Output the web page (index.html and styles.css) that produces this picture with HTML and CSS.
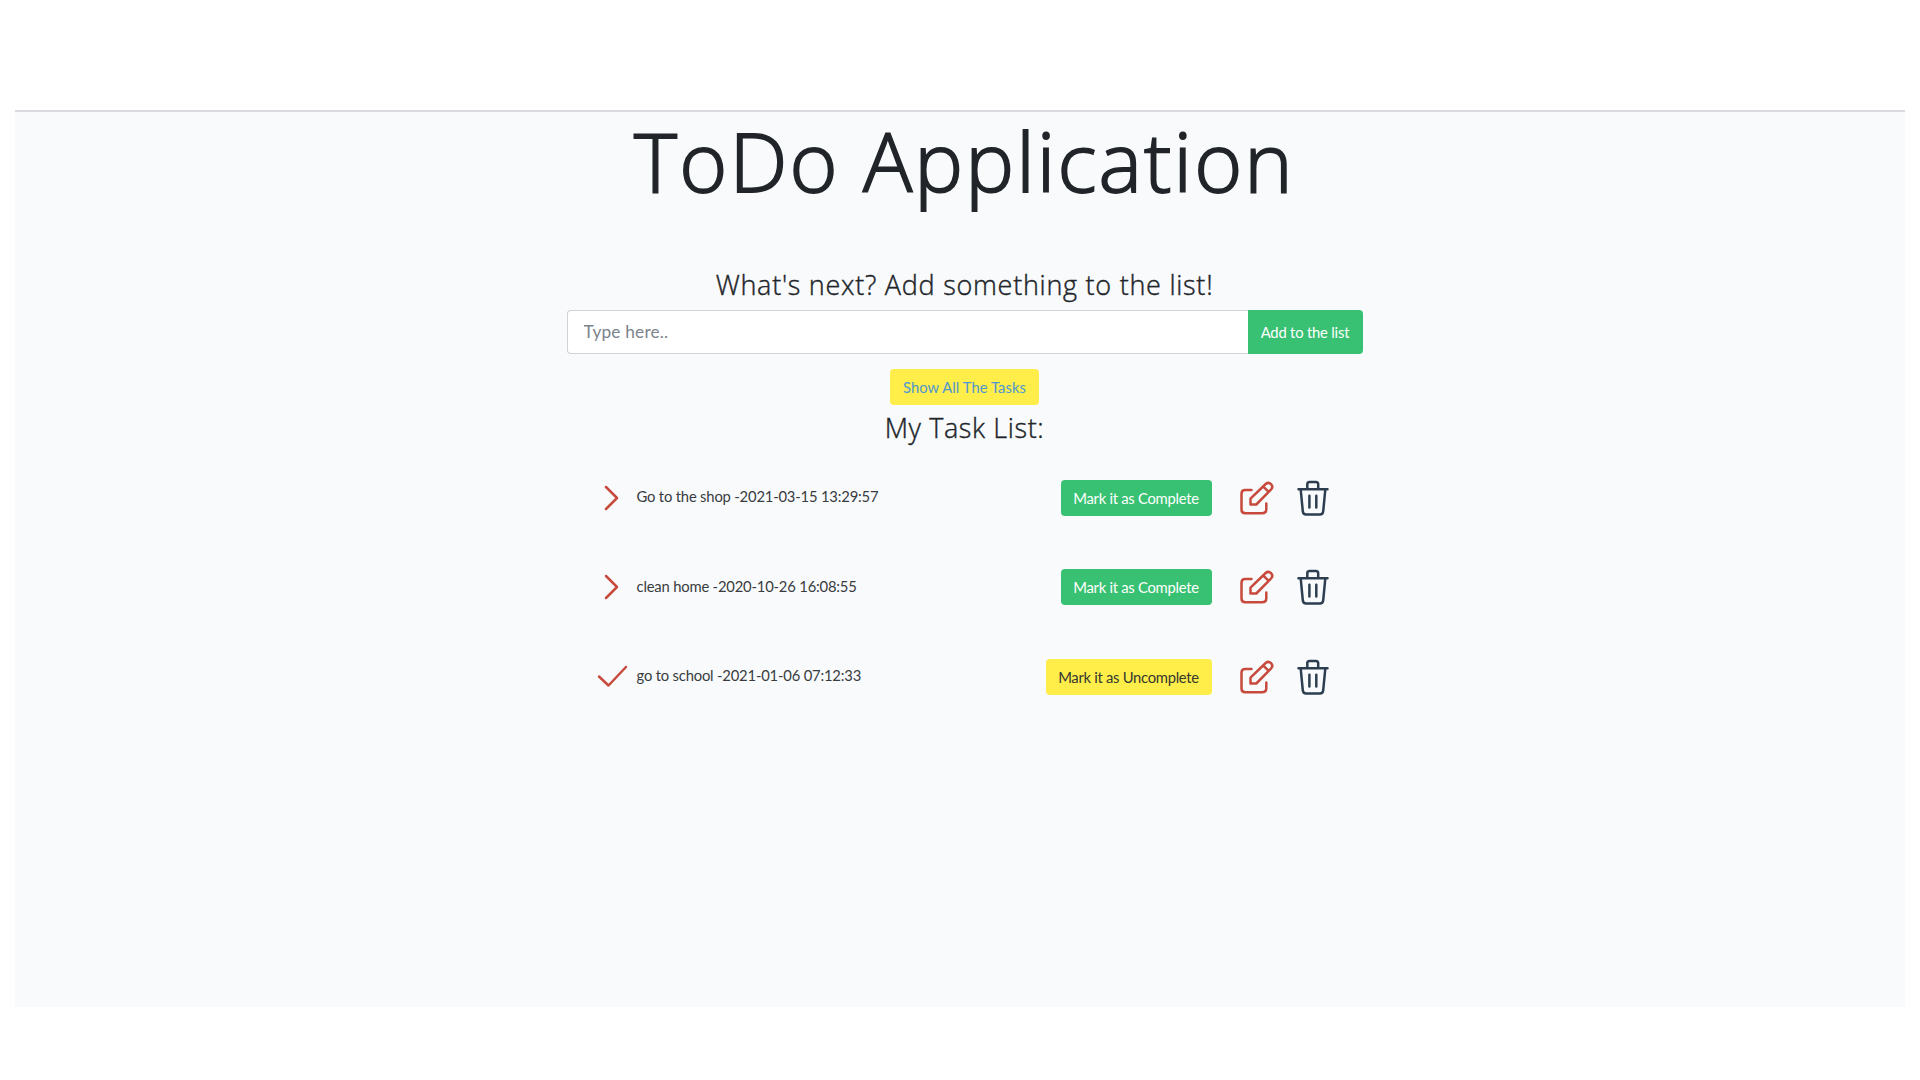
FILE: index.html
```
<!DOCTYPE html>
<html lang="en">
<head>
<meta charset="utf-8">
<title>ToDo Application</title>
<link rel="stylesheet" href="styles.css">
</head>
<body>
<svg class="sprite" aria-hidden="true">
  <symbol id="chevron" viewBox="0 0 32 26"><path d="M9 2l11 11L9 24"/></symbol>
  <symbol id="check" viewBox="0 0 32 26"><path d="M2 12.5l9.5 9L29 3"/></symbol>
  <symbol id="edit" viewBox="0 0 34 34"><path d="M11.5 9H5.2Q1.5 9 1.5 12.700V28.600Q1.500 32.300 5.200 32.300H22Q26.300 32.300 26.300 28.300V22.500M10.500 23.500V17.700L25.700 3Q28.400 .7 31 3.100Q33.500 5.600 31.200 8.300L16.300 23.500ZM23.300 5.600L28.700 10.900"/></symbol>
  <symbol id="trash" viewBox="0 0 32 36"><path d="M1.500 9.300H30.500M10.300 9V4.300Q10.300 2 12.600 2H18.900Q21.200 2 21.200 4.300V9M3.700 9.500L5.800 31.400Q6.100 34.500 9.200 34.500H22.800Q25.900 34.500 26.200 31.400L28.300 9.500M12.400 15.800V27.500M19.300 15.800V27.500"/></symbol>
</svg>
<main class="page">
  <h1 class="title">ToDo Application</h1>
  <section class="content">
    <h2 class="heading">What's next? Add something to the list!</h2>
    <form class="add-form">
      <input class="add-input" type="text" placeholder="Type here.." aria-label="New task">
      <button class="btn btn-success btn-add" type="button">Add to the list</button>
    </form>
    <button class="btn btn-warning btn-show" type="button">Show All The Tasks</button>
    <h2 class="heading heading-list">My Task List:</h2>
    <ul class="tasks">
      <li class="task">
        <svg class="icon icon-state"><use href="#chevron"/></svg>
        <span class="task-name">Go to the shop -2021-03-15 13:29:57</span>
        <button class="btn btn-success btn-mark" type="button">Mark it as Complete</button>
        <svg class="icon icon-edit"><use href="#edit"/></svg>
        <svg class="icon icon-trash"><use href="#trash"/></svg>
      </li>
      <li class="task">
        <svg class="icon icon-state"><use href="#chevron"/></svg>
        <span class="task-name">clean home -2020-10-26 16:08:55</span>
        <button class="btn btn-success btn-mark" type="button">Mark it as Complete</button>
        <svg class="icon icon-edit"><use href="#edit"/></svg>
        <svg class="icon icon-trash"><use href="#trash"/></svg>
      </li>
      <li class="task">
        <svg class="icon icon-state"><use href="#check"/></svg>
        <span class="task-name">go to school -2021-01-06 07:12:33</span>
        <button class="btn btn-warning btn-mark btn-undo" type="button">Mark it as Uncomplete</button>
        <svg class="icon icon-edit"><use href="#edit"/></svg>
        <svg class="icon icon-trash"><use href="#trash"/></svg>
      </li>
    </ul>
  </section>
</main>
</body>
</html>
```
FILE: styles.css
```
* { box-sizing: border-box; }
body {
  margin: 0;
  padding: 110px 15px 73px;
  background: #fff;
  color: #212529;
  font-family: Lato, "Open Sans", sans-serif;
}
.sprite { display: none; }
.page {
  height: 897px;
  padding-left: 9px;
  background: #f8fafc;
  border-top: 2px solid #d9dbde;
}
.title {
  margin: 0;
  height: 140px;
  font: 300 82px/96px "Open Sans", sans-serif;
  letter-spacing: 2.1px;
  text-align: center;
  -webkit-text-stroke: 1.8px #212529;
}
.content {
  display: flex;
  flex-direction: column;
  align-items: center;
  width: 796px;
  margin: 0 auto;
}
.heading {
  margin: 0;
  padding-top: 16px;
  height: 58px;
  font: 300 27px/34px "Open Sans", sans-serif;
  letter-spacing: .73px;
  -webkit-text-stroke: .4px #212529;
}
.add-form { display: flex; width: 100%; height: 44px; margin: 0; }
.add-input {
  flex: 1;
  min-width: 0;
  padding: 0 15px 1px 16px;
  border: 1px solid #ced4da;
  border-right: 0;
  border-radius: 4px 0 0 4px;
  background: #fff;
  font: 17.3px Lato, sans-serif;
  letter-spacing: .18px;
}
.add-input::placeholder { color: #7c848b; opacity: 1; }
.btn {
  height: 36px;
  padding: 0;
  border: 0;
  border-radius: 4px;
  font: 14.8px/36px Lato, sans-serif;
  text-align: center;
  white-space: nowrap;
}
.btn-success { background: #38c172; color: #fff; }
.btn-warning { background: #ffed4a; color: #343830; }
.btn-add { width: 115px; height: 44px; border-radius: 0 4px 4px 0; letter-spacing: -.2px; }
.btn-show { width: 149px; margin-top: 15px; color: #4f97cf; letter-spacing: .04px; }
.heading-list { height: 48px; padding-top: 6px; letter-spacing: .6px; }
.tasks { width: 100%; margin: 0; padding: 0 34px 0 30px; list-style: none; }
.task { display: flex; align-items: center; height: 89.6px; }
.icon {
  flex: none;
  fill: none;
  stroke: #c74a3d;
  stroke-width: 2.5;
  stroke-linecap: round;
  stroke-linejoin: round;
}
.icon-state { width: 32px; height: 26px; }
.task-name {
  flex: 1;
  padding: 0 0 3px 8px;
  color: #383c40;
  font-size: 14.8px;
  letter-spacing: -.19px;
}
.btn-mark { width: 151px; letter-spacing: -.27px; }
.btn-undo { width: 166px; letter-spacing: -.29px; }
.icon-edit { width: 34px; height: 34px; margin-left: 28px; }
.icon-trash { width: 32px; height: 36px; margin-left: 23px; stroke: #2c3e50; stroke-width: 2.5; }
```
